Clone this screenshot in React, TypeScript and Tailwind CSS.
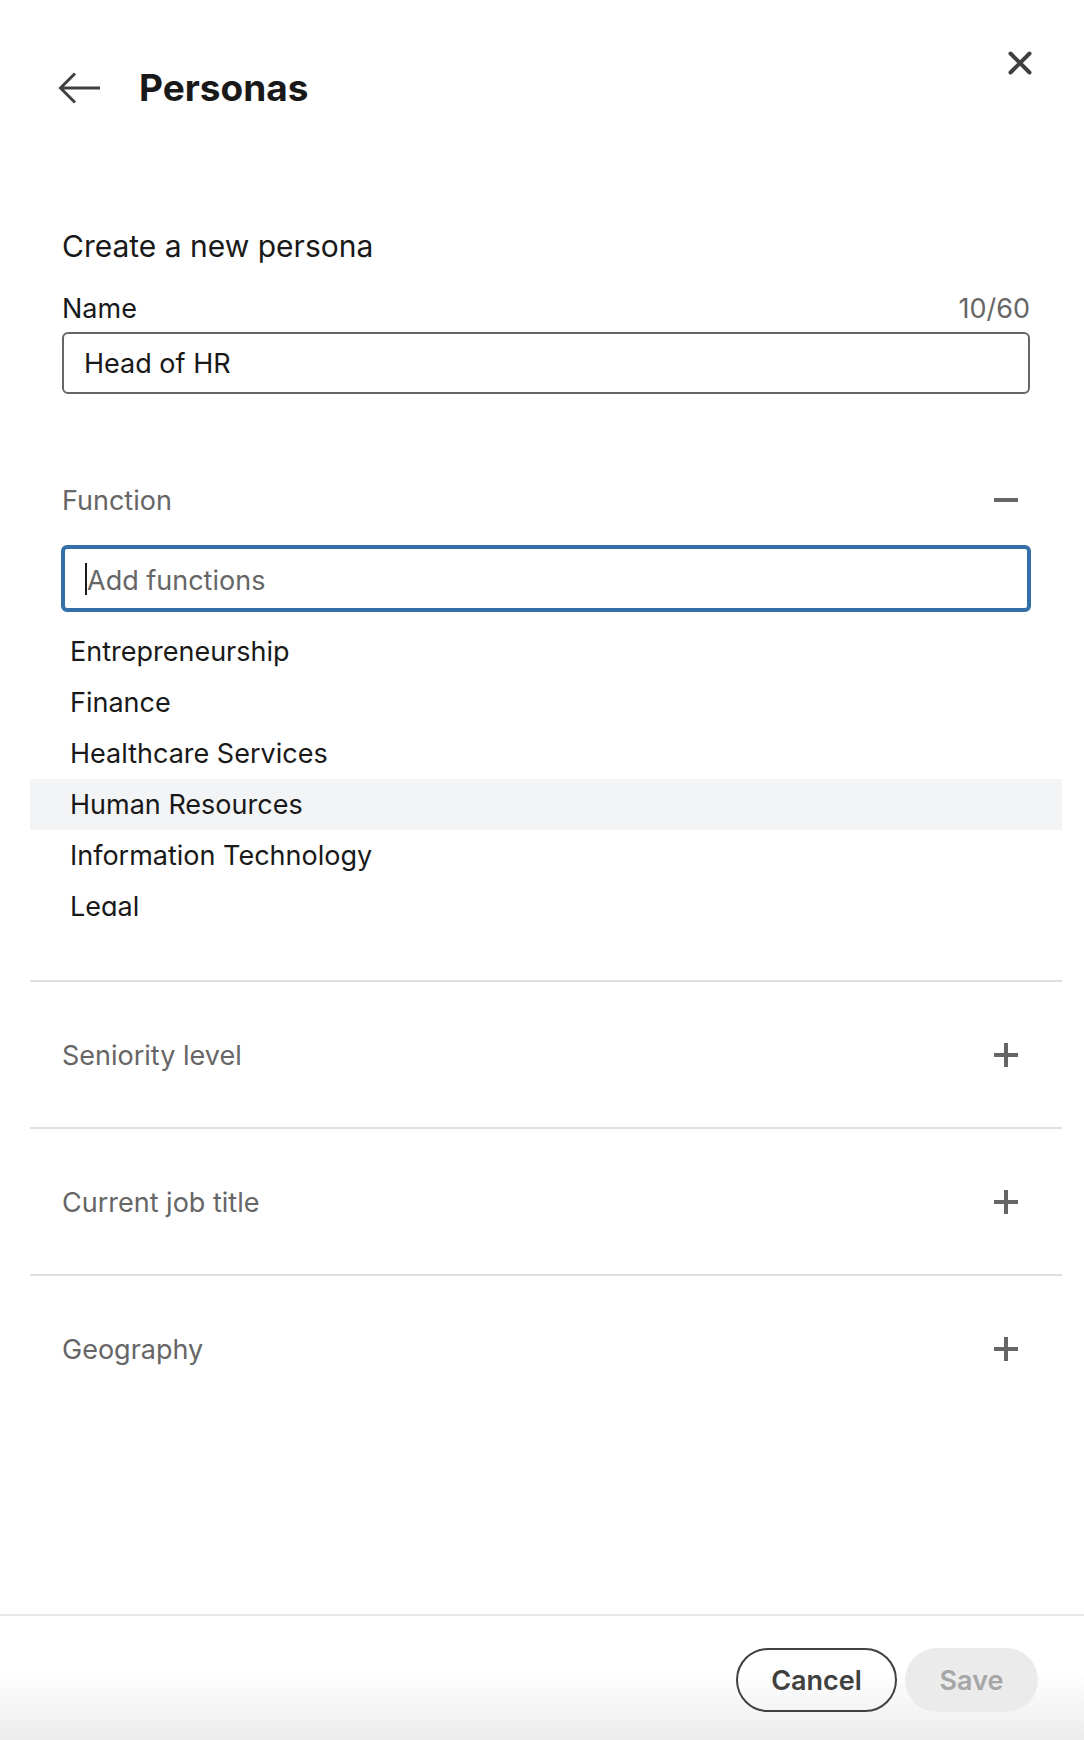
import React from "react";

const items = [
  "Entrepreneurship",
  "Finance",
  "Healthcare Services",
  "Human Resources",
  "Information Technology",
  "Legal",
];

function Plus() {
  return (
    <svg width="24" height="24" viewBox="0 0 24 24" className="block">
      <rect x="0" y="10" width="24" height="4" fill="#666666" />
      <rect x="10" y="0" width="4" height="24" fill="#666666" />
    </svg>
  );
}

function Section({ title }: { title: string }) {
  return (
    <div className="h-[145px] flex items-center justify-between px-[32px]">
      <span className="text-[27px] text-[#666666] mt-[3px]">{title}</span>
      <span className="mr-[12px]">
        <Plus />
      </span>
    </div>
  );
}

export default function App() {
  return (
    <div className="w-[1084px] h-[1740px] bg-white flex flex-col text-[#191919] font-['Inter','Liberation_Sans',sans-serif] overflow-hidden">
      <div className="flex-1 flex flex-col">
        {/* header */}
        <div className="flex items-start justify-between pl-[58px] pr-[52px]">
          <div className="mt-[64px] h-[48px] flex items-center">
            <svg width="42" height="32" viewBox="0 0 42 32" fill="none" className="block">
              <path d="M42 16H3" stroke="#404040" strokeWidth="3" />
              <path d="M17 1.5L2.5 16L17 30.5" stroke="#404040" strokeWidth="3" />
            </svg>
            <h1 className="ml-[39px] text-[37px] leading-[48px] font-bold text-[#191919]">Personas</h1>
          </div>
          <div className="mt-[51px] w-[24px] h-[24px]">
            <svg width="24" height="24" viewBox="0 0 24 24" fill="none" className="block">
              <path d="M2.5 2.5L21.5 21.5M21.5 2.5L2.5 21.5" stroke="#404040" strokeWidth="4" strokeLinecap="round" />
            </svg>
          </div>
        </div>

        {/* create */}
        <div className="pl-[62px] pr-[54px]">
          <div className="mt-[116px] text-[30px] leading-[36px]">Create a new persona</div>
          <div className="mt-[27px] flex justify-between text-[27px] leading-[36px]">
            <span>Name</span>
            <span className="text-[#666666]">10/60</span>
          </div>
          <div className="mt-[5px] h-[62px] border-2 border-[#666666] rounded-[6px] px-[20px] flex items-center text-[27px]">
            <span className="mt-[2px]">Head of HR</span>
          </div>
        </div>

        {/* function */}
        <div className="ml-[30px] mr-[22px]">
          <div className="px-[32px]">
            <div className="mt-[88px] flex items-center justify-between h-[36px]">
              <span className="text-[27px] text-[#666666] mt-[2px]">Function</span>
              <span className="mr-[12px] block w-[24px] h-[4px] bg-[#666666]"></span>
            </div>
            <div className="mt-[27px] -mx-[1px] h-[67px] border-[4px] border-[#3470a8] rounded-[6px] pl-[20px] flex items-center">
              <span className="w-[2px] h-[32px] bg-[#191919]"></span>
              <span className="text-[27px] text-[#666666] mt-[5px]">Add functions</span>
            </div>
          </div>
          <div className="mt-[14px] h-[290px] overflow-hidden">
            {items.map((it) => (
              <div
                key={it}
                className={`h-[51px] flex items-center pl-[40px] text-[27px] ${
                  it === "Human Resources" ? "bg-[#f3f4f6]" : ""
                }`}
              >
                <span className="mt-[1px]">{it}</span>
              </div>
            ))}
          </div>
          <div className="mt-[64px] h-[2px] bg-[#e0e0e0]"></div>
          <Section title="Seniority level" />
          <div className="h-[2px] bg-[#e0e0e0]"></div>
          <Section title="Current job title" />
          <div className="h-[2px] bg-[#e0e0e0]"></div>
          <Section title="Geography" />
        </div>
      </div>

      {/* footer */}
      <div className="h-[126px] border-t-2 border-[#e8e8e8] bg-[linear-gradient(to_bottom,#ffffff_45%,#ececec)] flex justify-end items-start pt-[32px] pr-[46px] gap-[8px]">
        <button className="w-[161px] h-[64px] border-2 border-[#404040] rounded-full text-[27px] font-semibold text-[#404040] pt-[3px]">
          Cancel
        </button>
        <button className="w-[133px] h-[64px] rounded-full bg-[#ebebeb] text-[27px] font-semibold text-[#a6a6a6] pt-[3px]">
          Save
        </button>
      </div>
    </div>
  );
}
